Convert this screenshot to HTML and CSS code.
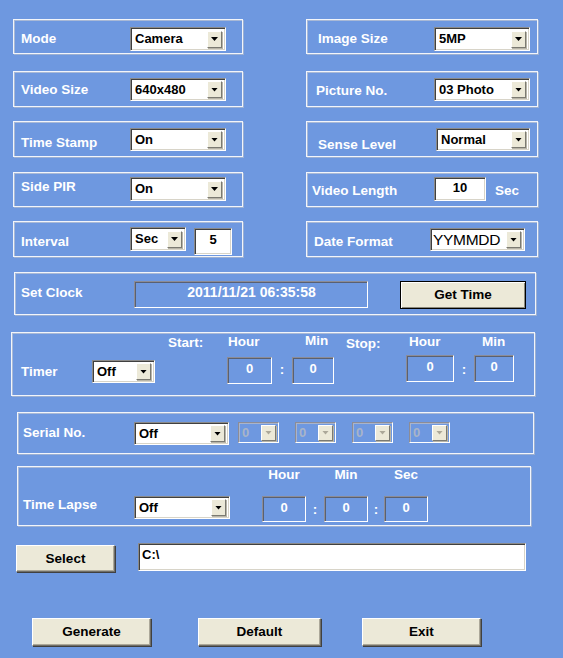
FILE: index.html
```html
<!DOCTYPE html>
<html lang="en">
<head>
<meta charset="utf-8">
<title>Camera Setup</title>
<link rel="stylesheet" href="styles.css">
</head>
<body>
<main class="panel">

  <div class="row row-1">
    <div class="group g-left g-mode">
      <span class="label lw-left">Mode</span>
      <div class="combo ctl w96"><span class="val">Camera</span><span class="drop"></span></div>
    </div>
    <div class="group g-right g-image">
      <span class="label ml11 lw116">Image Size</span>
      <div class="combo ctl w96"><span class="val">5MP</span><span class="drop"></span></div>
    </div>
  </div>

  <div class="row row-2">
    <div class="group g-left g-vsize">
      <span class="label lw-left">Video Size</span>
      <div class="combo ctl w96 h23"><span class="val">640x480</span><span class="drop"></span></div>
    </div>
    <div class="group g-right g-picture">
      <span class="label ml9 lw118">Picture No.</span>
      <div class="combo ctl w96 h23"><span class="val">03 Photo</span><span class="drop"></span></div>
    </div>
  </div>

  <div class="row row-3">
    <div class="group g-left g-stamp">
      <span class="label lw-left">Time Stamp</span>
      <div class="combo ctl w96 h23"><span class="val">On</span><span class="drop"></span></div>
    </div>
    <div class="group g-right g-sense">
      <span class="label ml11 lw118">Sense Level</span>
      <div class="combo ctl w94 h23"><span class="val">Normal</span><span class="drop"></span></div>
    </div>
  </div>

  <div class="row row-4">
    <div class="group g-left g-pir">
      <span class="label lw-left">Side PIR</span>
      <div class="combo ctl w96"><span class="val">On</span><span class="drop"></span></div>
    </div>
    <div class="group g-right g-vlength">
      <span class="label ml5 lw122">Video Length</span>
      <div class="edit ctl w52 h24">10</div>
      <span class="label unit">Sec</span>
    </div>
  </div>

  <div class="row row-5">
    <div class="group g-left g-interval">
      <span class="label lw-left">Interval</span>
      <div class="combo ctl w56"><span class="val">Sec</span><span class="drop"></span></div>
      <div class="edit interval-edit">5</div>
    </div>
    <div class="group g-right g-dformat">
      <span class="label ml7 lw116">Date Format</span>
      <div class="combo combo-plain ctl w95 h23"><span class="val">YYMMDD</span><span class="drop"></span></div>
    </div>
  </div>

  <div class="group clock">
    <span class="label clock-label">Set Clock</span>
    <div class="clock-field">2011/11/21 06:35:58</div>
    <button class="btn btn-default gettime" type="button">Get Time</button>
  </div>

  <div class="group timer">
    <span class="label t-start">Start:</span>
    <span class="label t-hour">Hour</span>
    <span class="label t-min">Min</span>
    <span class="label t-stop">Stop:</span>
    <span class="label t-hour2">Hour</span>
    <span class="label t-min2">Min</span>

    <span class="label t-name">Timer</span>
    <div class="combo t-combo"><span class="val">Off</span><span class="drop"></span></div>
    <div class="field t-f1">0</div>
    <span class="label colon t-c1">:</span>
    <div class="field t-f2">0</div>
    <div class="field t-f3">0</div>
    <span class="label colon t-c2">:</span>
    <div class="field t-f4">0</div>
  </div>

  <div class="group serial">
    <span class="label serial-label">Serial No.</span>
    <div class="combo serial-combo"><span class="val">Off</span><span class="drop"></span></div>
    <div class="mini-list">
      <div class="combo mini"><span class="val">0</span><span class="drop"></span></div>
      <div class="combo mini"><span class="val">0</span><span class="drop"></span></div>
      <div class="combo mini"><span class="val">0</span><span class="drop"></span></div>
      <div class="combo mini"><span class="val">0</span><span class="drop"></span></div>
    </div>
  </div>

  <div class="group lapse">
    <span class="label l-hour">Hour</span>
    <span class="label l-min">Min</span>
    <span class="label l-sec">Sec</span>

    <span class="label l-name">Time Lapse</span>
    <div class="combo l-combo"><span class="val">Off</span><span class="drop"></span></div>
    <div class="field l-f1">0</div>
    <span class="label colon l-c1">:</span>
    <div class="field l-f2">0</div>
    <span class="label colon l-c2">:</span>
    <div class="field l-f3">0</div>
  </div>

  <div class="path-row">
    <button class="btn select" type="button">Select</button>
    <div class="path">C:\</div>
  </div>

  <div class="actions">
    <button class="btn act-generate" type="button">Generate</button>
    <button class="btn act-default" type="button">Default</button>
    <button class="btn act-exit" type="button">Exit</button>
  </div>

</main>
</body>
</html>
```

FILE: styles.css
```css
* {
  box-sizing: border-box;
}

html, body {
  margin: 0;
  padding: 0;
}

body {
  width: 563px;
  height: 658px;
  overflow: hidden;
  background: #6e98e0;
  font-family: "Liberation Sans", Arial, sans-serif;
  font-size: 13px;
  font-weight: bold;
  color: #fff;
}

.panel {
  display: flex;
  flex-direction: column;
  align-items: flex-start;
}

/* ---------- group boxes ---------- */

.group {
  border: 1px solid #f2f5fb;
  box-shadow: inset 1px 1px 0 #a9b9d6, 1px 1px 0 #9cb0d2;
  display: flex;
  align-items: flex-start;
}

.label {
  display: block;
  font-size: 13.5px;
  line-height: 16px;
  white-space: nowrap;
  color: #fff;
  margin-top: var(--lt, 0);
}

.ctl {
  margin-top: var(--ct, 0);
}

/* two-column rows of settings */
.row {
  display: flex;
  gap: 63px;
  margin-left: 13px;
}
.row-1 { margin-top: 19px; height: 35px; }
.row-2 { margin-top: 17px; height: 36px; }
.row-3 { margin-top: 14px; height: 36px; }
.row-4 { margin-top: 15px; height: 35px; }
.row-5 { margin-top: 14px; height: 36px; }

.g-left  { width: 230px; height: 100%; }
.g-right { width: 232px; height: 100%; }

.lw-left { margin-left: 7px; width: 109px; }
.ml5  { margin-left: 5px; }
.ml7  { margin-left: 7px; }
.ml9  { margin-left: 9px; }
.ml11 { margin-left: 11px; }
.lw116 { width: 116px; }
.lw118 { width: 118px; }
.lw122 { width: 122px; }

.g-mode     { --lt: 11px; --ct: 7px; }
.g-vsize    { --lt: 10px; --ct: 6px; }
.g-stamp    { --lt: 13px; --ct: 6px; }
.g-pir      { --lt: 6px;  --ct: 4px; }
.g-interval { --lt: 12px; --ct: 5px; }
.g-image    { --lt: 11px; --ct: 7px; }
.g-picture  { --lt: 11px; --ct: 6px; }
.g-sense    { --lt: 15px; --ct: 6px; }
.g-vlength  { --lt: 10px; --ct: 4px; }
.g-dformat  { --lt: 12px; --ct: 6px; }

.unit { margin-left: 9px; }

/* ---------- controls ---------- */

.combo,
.edit,
.path {
  background: #fff;
  color: #000;
  border: 1px solid;
  border-color: #8a8a8a #fff #fff #8a8a8a;
  box-shadow: inset 1px 1px 0 #404040, inset -1px -1px 0 #d8d4c8;
}

.combo {
  display: flex;
  align-items: center;
  height: 24px;
  padding: 2px 3px 2px 4px;
}
.combo .val {
  flex: 1;
  line-height: 16px;
  white-space: nowrap;
  overflow: hidden;
}
.combo-plain {
  padding-left: 2px;
}
.combo-plain .val {
  font-weight: normal;
  font-size: 15.5px;
  letter-spacing: -0.3px;
}

.drop {
  flex: none;
  width: 15px;
  height: 17px;
  background: #ece9d8;
  border: 1px solid;
  border-color: #fff #7b7a72 #7b7a72 #fff;
  box-shadow: 1px 1px 0 #b8b5a8;
  display: flex;
  align-items: center;
  justify-content: center;
}
.drop::after {
  content: "";
  width: 7px;
  height: 4px;
  background: #000;
  clip-path: polygon(0 0, 100% 0, 50% 100%);
}

.w52 { width: 52px; }
.w56 { width: 56px; }
.w94 { width: 94px; }
.w95 { width: 95px; }
.w96 { width: 96px; }
.h23 { height: 23px; }
.h24 { height: 24px; }

.edit {
  text-align: center;
  line-height: 20px;
  padding-top: 0;
}
.interval-edit {
  margin-left: 8px;
  margin-top: 6px;
  width: 38px;
  height: 27px;
  line-height: 21px;
}

/* blue read-only fields */
.field,
.clock-field {
  background: transparent;
  color: #fff;
  text-align: center;
  border: 1px solid;
  border-color: #8c8c96 #fff #fff #8c8c96;
  box-shadow: inset 1px 1px 0 #5a6070;
}
.field {
  line-height: 21px;
}

/* ---------- buttons ---------- */

.btn {
  font: inherit;
  font-size: 13.5px;
  color: #000;
  background: #ece9d8;
  border: 1px solid;
  border-color: #fff #6f6e68 #6f6e68 #fff;
  box-shadow: inset -1px -1px 0 #aca899, 1px 1px 0 #404040;
  padding: 0;
  height: 28px;
  line-height: 24px;
  text-align: center;
  cursor: default;
}
.btn-default {
  border: 1px solid #000;
  box-shadow: inset 1px 1px 0 #fff, inset -1px -1px 0 #8a887c;
}

/* ---------- set clock ---------- */

.clock {
  margin-top: 15px;
  margin-left: 14px;
  width: 522px;
  height: 43px;
}
.clock-label {
  margin-left: 6px;
  margin-top: 12px;
  width: 113px;
}
.clock-field {
  margin-top: 8px;
  width: 234px;
  height: 27px;
  font-size: 14px;
  line-height: 21px;
  padding-left: 1px;
}
.gettime {
  margin-top: 8px;
  margin-left: 32px;
  width: 126px;
}

/* ---------- timer ---------- */

.timer {
  margin-top: 17px;
  margin-left: 11px;
  width: 524px;
  height: 64px;
  display: grid;
  grid-template-columns: 71px 63px 72px 45px 20px 42px 72px 48px 20px 40px;
  grid-template-rows: 20px 41px;
  padding: 1px 0 0 9px;
}
.timer > * {
  align-self: start;
}
.t-start { grid-area: 1 / 3; margin-left: 13px; margin-top: 1px; }
.t-hour  { grid-area: 1 / 4; margin-left: 1px; }
.t-min   { grid-area: 1 / 6; margin-left: 13px; margin-top: -1px; }
.t-stop  { grid-area: 1 / 7; margin-left: 12px; margin-top: 2px; }
.t-hour2 { grid-area: 1 / 8; margin-left: 3px; }
.t-min2  { grid-area: 1 / 10; margin-left: 8px; }

.t-name  { grid-area: 2 / 1; margin-top: 10px; }
.t-combo { grid-area: 2 / 2; margin-top: 6px; height: 23px; }
.t-f1    { grid-area: 2 / 4; margin-top: 3px; height: 27px; }
.t-c1    { grid-area: 2 / 5; margin-top: 8px; text-align: center; }
.t-f2    { grid-area: 2 / 6; margin-top: 3px; height: 27px; }
.t-f3    { grid-area: 2 / 8; margin-top: 1px; height: 27px; }
.t-c2    { grid-area: 2 / 9; margin-top: 8px; text-align: center; }
.t-f4    { grid-area: 2 / 10; margin-top: 1px; height: 27px; }

/* ---------- serial number ---------- */

.serial {
  margin-top: 16px;
  margin-left: 17px;
  width: 517px;
  height: 42px;
}
.serial-label {
  margin-left: 5px;
  margin-top: 12px;
  width: 111px;
}
.serial-combo {
  margin-top: 9px;
  width: 95px;
  height: 23px;
}
.mini-list {
  display: flex;
  gap: 16px;
  margin-left: 9px;
  margin-top: 9px;
}
.combo.mini {
  width: 41px;
  height: 21px;
  background: transparent;
  padding: 1px 2px 1px 3px;
  border-color: #8c8c96 #fff #fff #8c8c96;
  box-shadow: inset 1px 1px 0 #a8b4cc;
}
.combo.mini .val {
  color: #a9b4c8;
}
.combo.mini .drop {
  height: 16px;
  width: 15px;
}
.combo.mini .drop::after {
  background: #aca899;
}

/* ---------- time lapse ---------- */

.lapse {
  margin-top: 12px;
  margin-left: 17px;
  width: 514px;
  height: 60px;
  display: grid;
  grid-template-columns: 111px 96px 32px 44px 18px 44px 16px 44px;
  grid-template-rows: 16px 42px;
  padding-left: 5px;
}
.lapse > * {
  align-self: start;
}
.l-hour { grid-area: 1 / 4; text-align: center; }
.l-min  { grid-area: 1 / 6; text-align: center; }
.l-sec  { grid-area: 1 / 8; text-align: center; }

.l-name  { grid-area: 2 / 1; margin-top: 14px; }
.l-combo { grid-area: 2 / 2; margin-top: 13px; height: 23px; }
.l-f1    { grid-area: 2 / 4; margin-top: 13px; height: 26px; }
.l-c1    { grid-area: 2 / 5; margin-top: 19px; text-align: center; }
.l-f2    { grid-area: 2 / 6; margin-top: 13px; height: 26px; }
.l-c2    { grid-area: 2 / 7; margin-top: 19px; text-align: center; }
.l-f3    { grid-area: 2 / 8; margin-top: 13px; height: 26px; }

/* ---------- output folder ---------- */

.path-row {
  display: flex;
  align-items: flex-start;
  gap: 23px;
  margin-top: 17px;
  margin-left: 16px;
}
.select {
  margin-top: 2px;
  width: 99px;
  height: 27px;
}
.path {
  width: 388px;
  height: 28px;
  padding: 2px 3px;
  line-height: 18px;
}

/* ---------- bottom actions ---------- */

.actions {
  display: flex;
  margin-top: 46px;
  margin-left: 32px;
}
.act-generate { width: 119px; }
.act-default  { width: 123px; margin-left: 47px; }
.act-exit     { width: 119px; margin-left: 41px; }
```
